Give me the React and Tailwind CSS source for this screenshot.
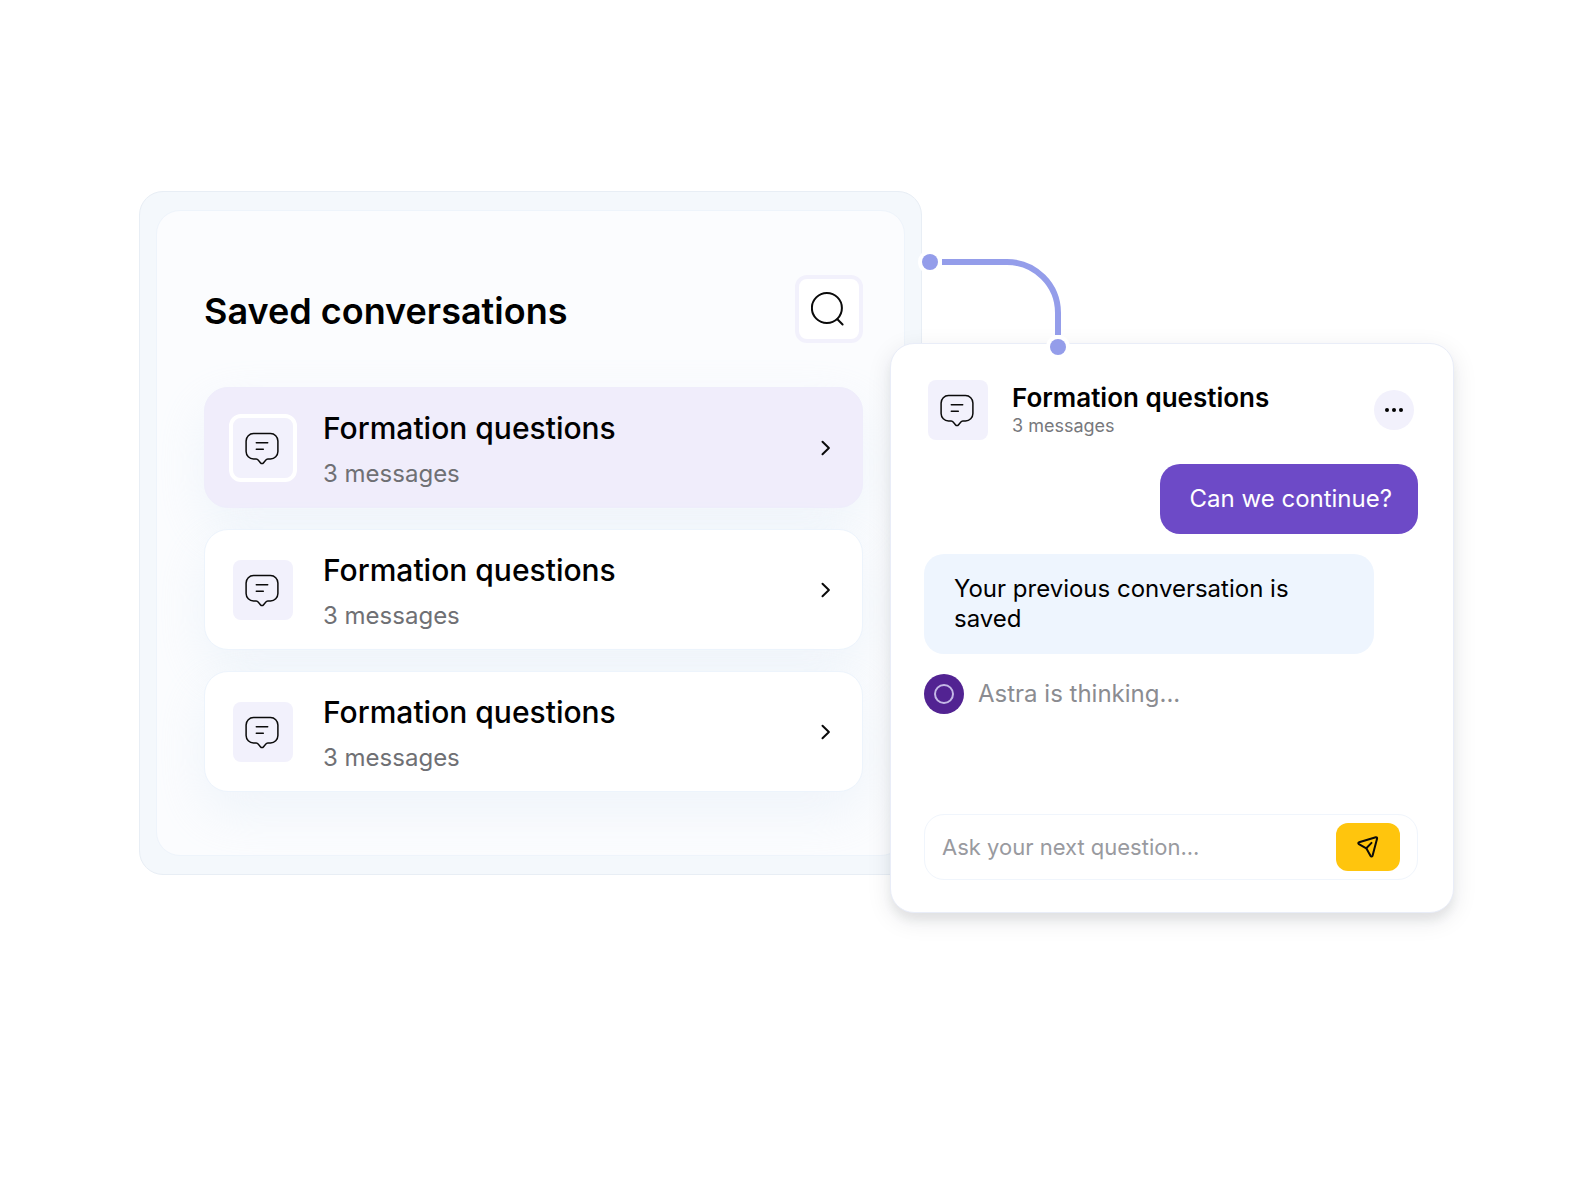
import clsx from "clsx";

const conversations = [
  { id: 1, title: "Formation questions", count: 3, active: true },
  { id: 2, title: "Formation questions", count: 3, active: false },
  { id: 3, title: "Formation questions", count: 3, active: false },
];

const MessageIcon = () => (
  <svg
    viewBox="0 0 36 36"
    className="size-9"
    fill="none"
    stroke="#0a0a0a"
    strokeWidth="1.5"
    strokeLinecap="round"
    strokeLinejoin="round"
    aria-hidden="true"
  >
    <path d="M8.5 3.6h17a7.4 7.4 0 0 1 7.4 7.4v10.6a7.4 7.4 0 0 1-7.4 7.4h-2.6c-1.1 0-1.8.6-2.5 1.5l-1.8 2.2c-1 1.2-2.2 1.2-3.2 0l-1.8-2.2c-.7-.9-1.4-1.5-2.5-1.5H8.5a7.4 7.4 0 0 1-7.4-7.4V11a7.4 7.4 0 0 1 7.4-7.4z" />
    <path d="M11.3 12.8h11.4M11.3 19.2h7" />
  </svg>
);

const SearchIcon = () => (
  <svg
    viewBox="0 0 36 36"
    className="size-9"
    fill="none"
    stroke="#0a0a0a"
    strokeWidth="2"
    strokeLinecap="round"
    aria-hidden="true"
  >
    <circle cx="15.9" cy="17" r="15" />
    <path d="M26.4 28.3l5.2 5.2" />
  </svg>
);

const ChevronIcon = () => (
  <svg
    viewBox="0 0 16 16"
    className="size-4"
    fill="none"
    stroke="#0a0a0a"
    strokeWidth="2"
    strokeLinecap="round"
    strokeLinejoin="round"
    aria-hidden="true"
  >
    <path d="M4.5 1.8l6.4 6.2-6.4 6.2" />
  </svg>
);

const SendIcon = () => (
  <svg
    viewBox="0 0 24 24"
    className="size-6"
    fill="none"
    stroke="#0a0a0a"
    strokeWidth="2"
    strokeLinecap="round"
    strokeLinejoin="round"
    aria-hidden="true"
  >
    <path d="M3.1 7.2 19.8 2.3c.9-.2 1.5.4 1.3 1.3l-4.5 17c-.3 1-1.5 1.2-2 .3l-4.3-7.6-7.4-4.2c-.9-.6-.8-1.6.2-1.9z" />
    <path d="M10.3 13.3l5.2-5.4" />
  </svg>
);

const Connector = () => (
  <svg
    viewBox="0 0 156 112"
    className="absolute -top-24 left-6 h-28 w-[156px]"
    fill="none"
    aria-hidden="true"
  >
    <path
      d="M27 14H92a51 51 0 0 1 51 51V87"
      stroke="#949dea"
      strokeWidth="6"
    />
    <circle cx="15" cy="14" r="12" fill="#fff" />
    <circle cx="15" cy="14" r="8" fill="#949dea" />
    <circle cx="143" cy="99" r="12" fill="#fff" />
    <circle cx="143" cy="99" r="8" fill="#949dea" />
  </svg>
);

const Conversation = ({ title, count, active }) => (
  <li>
    <button
      type="button"
      className={clsx(
        "flex h-[121px] w-full items-center rounded-3xl border pr-7 pl-6 text-left shadow-[0_20px_50px_rgba(214,230,242,0.32)]",
        active
          ? "border-[#efedfb] bg-[#f0edfb]"
          : "border-[#edf4fc] bg-white"
      )}
    >
      <span
        className={clsx(
          "flex size-[68px] shrink-0 items-center justify-center rounded-xl border-4 bg-[#f2f1fc] bg-clip-padding",
          active ? "border-white" : "border-transparent"
        )}
      >
        <MessageIcon />
      </span>
      <span className="ml-[26px] flex flex-1 flex-col gap-2 pt-1">
        <span className="text-[30px] leading-10 font-medium">{title}</span>
        <span className="text-2xl leading-9 text-[#6f7074]">
          {count} messages
        </span>
      </span>
      <ChevronIcon />
    </button>
  </li>
);

const SavedConversations = () => (
  <section className="rounded-3xl border border-[#e8eef5] bg-[#f4f8fc] px-4 py-[18px]">
    <div className="rounded-3xl border border-[#eef4fb] bg-[#fbfcfe] pt-16 pr-[41px] pb-[63px] pl-[47px]">
      <div className="flex items-center justify-between">
        <h1 className="pt-1 text-4xl font-semibold">Saved conversations</h1>
        <button
          type="button"
          aria-label="Search"
          className="flex size-[68px] items-center justify-center rounded-xl border-4 border-[#f2f1fc] bg-white"
        >
          <SearchIcon />
        </button>
      </div>
      <ul className="mt-11 flex flex-col gap-[21px]">
        {conversations.map((item) => (
          <Conversation key={item.id} {...item} />
        ))}
      </ul>
    </div>
  </section>
);

const ChatCard = () => (
  <section className="relative mt-[152px] -mr-px -ml-8 flex h-[570px] flex-col rounded-3xl border border-[#e9edf8] bg-white pt-9 pr-[35px] pb-8 pl-[33px] shadow-[0_8px_8px_rgba(0,0,0,0.05),0_7px_24px_rgba(20,25,50,0.1)]">
    <Connector />
    <header className="flex items-center px-1">
      <span className="flex size-[60px] items-center justify-center rounded-lg bg-[#f2f1fc]">
        <MessageIcon />
      </span>
      <div className="ml-6 flex-1 pt-1">
        <h2 className="text-[26px] leading-7 font-semibold">
          Formation questions
        </h2>
        <p className="text-lg leading-7 text-[#77787c]">3 messages</p>
      </div>
      <button
        type="button"
        aria-label="More options"
        className="flex size-10 items-center justify-center gap-[3px] rounded-full bg-[#f2f1fc]"
      >
        <span className="size-1 rounded-full bg-black" />
        <span className="size-1 rounded-full bg-black" />
        <span className="size-1 rounded-full bg-black" />
      </button>
    </header>

    <p className="mt-6 self-end rounded-[20px] bg-[#6d4ac7] py-5 pr-[26px] pl-[30px] text-2xl leading-[30px] text-white">
      Can we continue?
    </p>
    <p className="mt-5 mr-11 rounded-[20px] bg-[#eef5fe] px-[30px] py-5 text-2xl leading-[30px]">
      Your previous conversation is saved
    </p>
    <div className="mt-5 flex items-center gap-[14px]">
      <span className="flex size-10 items-center justify-center rounded-full bg-[#522392]">
        <span className="size-5 rounded-full border-2 border-[#c4b8e6]" />
      </span>
      <p className="text-2xl text-[#8b8c91]">Astra is thinking...</p>
    </div>

    <form
      className="mt-auto flex h-[66px] items-center rounded-[20px] border border-[#f0f5fc] px-[17px]"
      onSubmit={(e) => e.preventDefault()}
    >
      <input
        type="text"
        aria-label="Ask your next question"
        placeholder="Ask your next question..."
        className="min-w-0 flex-1 text-[22px] outline-none placeholder:text-[#999a9f]"
      />
      <button
        type="submit"
        aria-label="Send"
        className="flex h-12 w-16 items-center justify-center rounded-xl bg-[#ffc50d]"
      >
        <SendIcon />
      </button>
    </form>
  </section>
);

const App = () => {
  return (
    <main className="grid min-h-screen grid-cols-[783fr_531fr] items-start bg-white pt-[191px] pr-[121px] pb-20 pl-[139px] font-['Inter',sans-serif] text-black">
      <SavedConversations />
      <ChatCard />
    </main>
  );
};

export default App;
